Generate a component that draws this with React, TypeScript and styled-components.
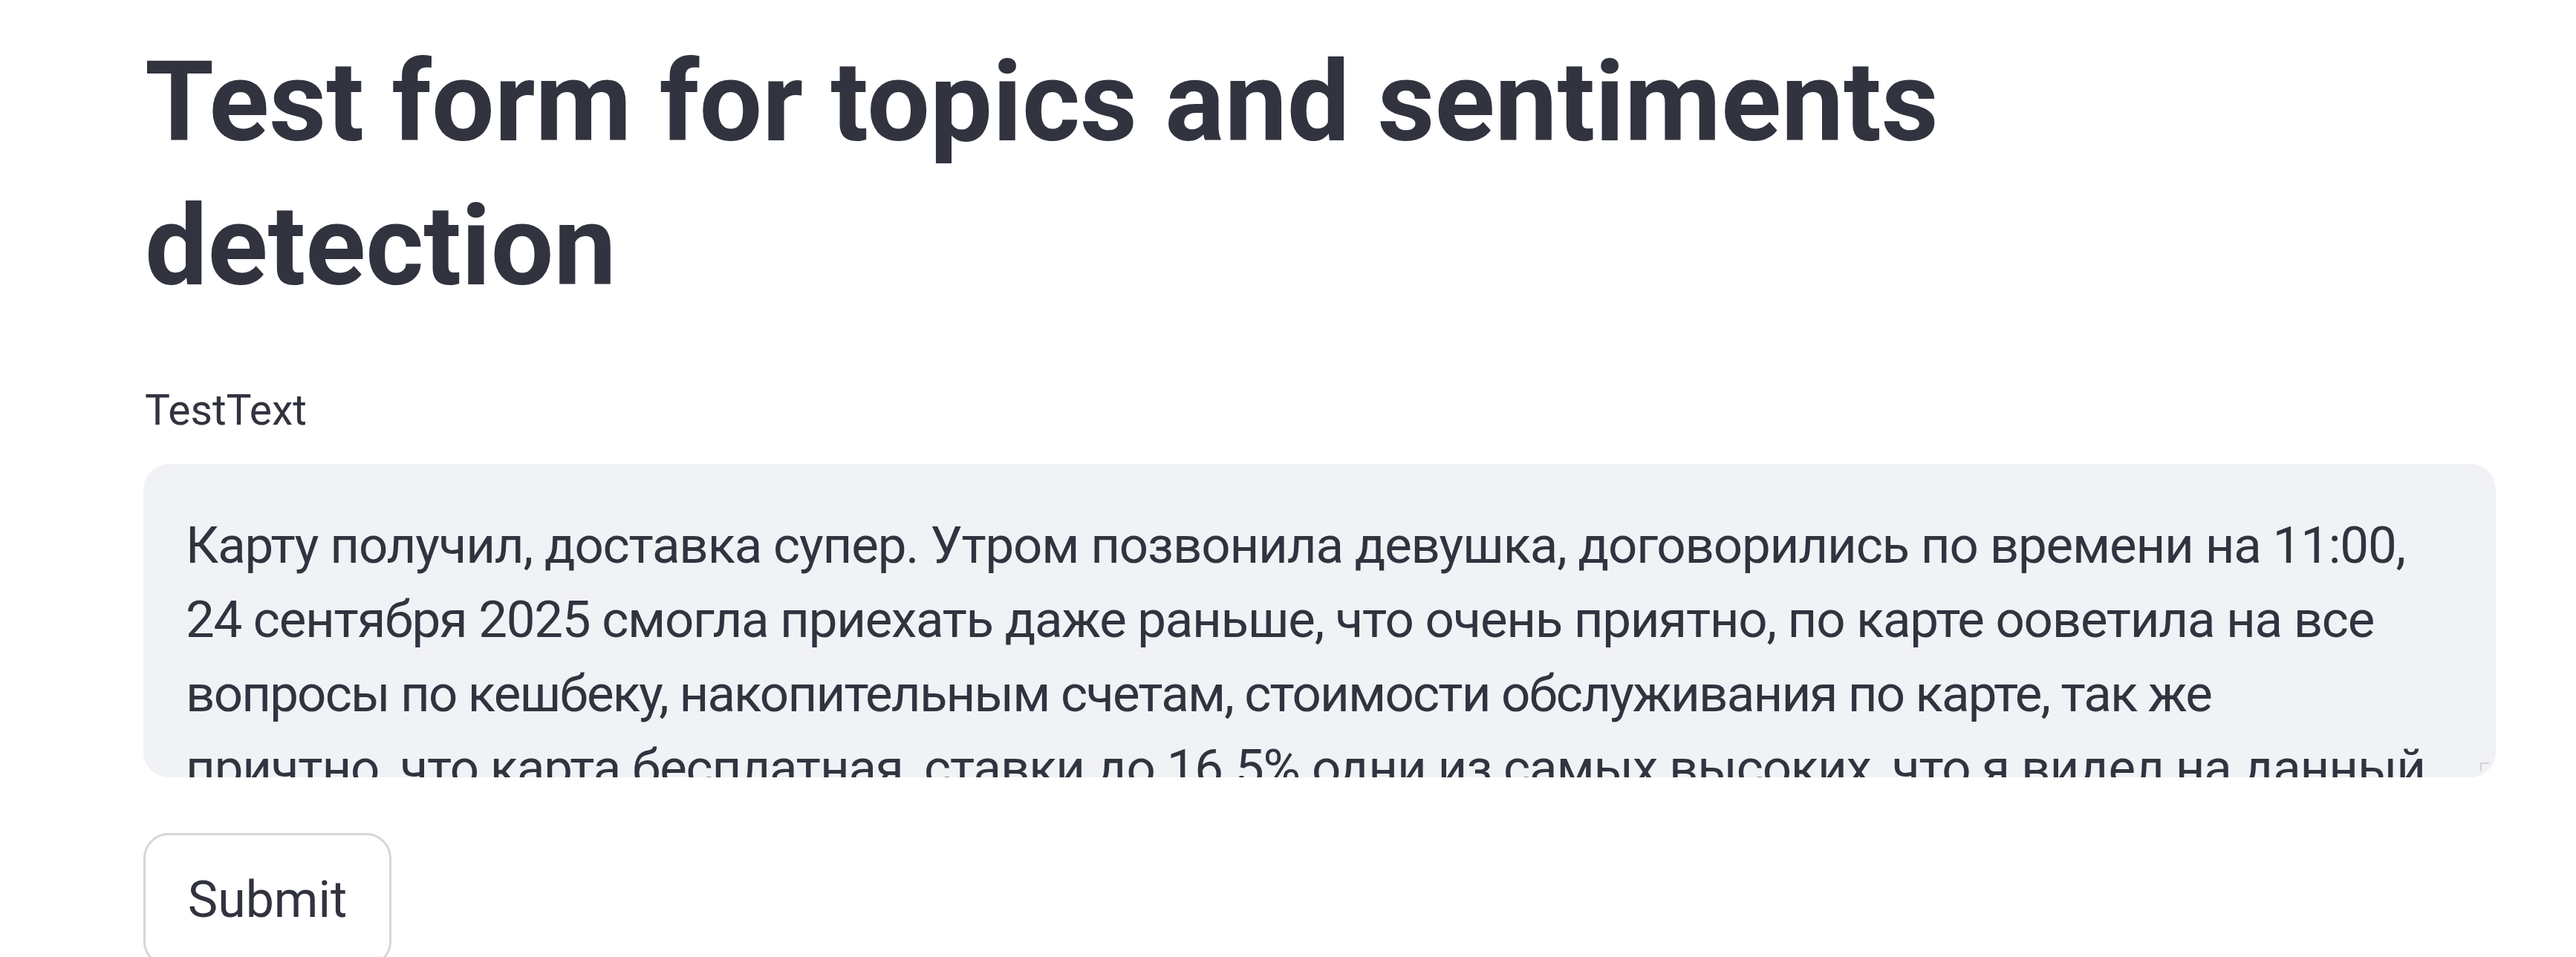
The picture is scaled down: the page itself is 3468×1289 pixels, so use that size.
import { useLayoutEffect, useRef, useState } from "react"
import styled, { createGlobalStyle } from "styled-components"

const GlobalStyle = createGlobalStyle`
    html, body {
        margin: 0;
        padding: 0;
        background: #ffffff;
        color: #31333f;
        font-family: Roboto, "Noto Sans", sans-serif;
    }
`

const Main = styled.main`
    display: flex;
    flex-direction: column;
    align-items: flex-start;
    width: 3167px;
    padding: 41px 0 0 193px;
`

const Title = styled.h1`
    margin: 0 0 84px 2px;
    font-family: Roboto, "Noto Sans", sans-serif;
    font-weight: 700;
    font-size: 150px;
    line-height: 194px;
    color: #31333f;
`

const Label = styled.label`
    margin: 0 0 32px 2px;
    font-size: 57px;
    line-height: 80px;
    color: #31333f;
`

const AreaBox = styled.div`
    position: relative;
    box-sizing: border-box;
    width: 100%;
    height: 422px;
    margin-bottom: 75px;
    padding: 60px 57px 0 57px;
    border-radius: 34px;
    background: #f0f2f6;
    overflow: hidden;
    font-family: Roboto, "Noto Sans", sans-serif;
    font-size: 69px;
    line-height: 100px;
    color: #31333f;
`

const Line = styled.span`
    display: block;
    width: max-content;
    white-space: nowrap;
`

const Grip = styled.span`
    position: absolute;
    right: 9px;
    bottom: 8px;
    width: 10px;
    height: 10px;
    border-top: 2px solid #d3d4d8;
    border-left: 2px solid #d3d4d8;
`

const Button = styled.button`
    display: flex;
    align-items: center;
    justify-content: center;
    box-sizing: border-box;
    width: 334px;
    height: 180px;
    padding: 0;
    border: 3px solid #d6d6d9;
    border-radius: 34px;
    background: #ffffff;
    font-family: Roboto, "Noto Sans", sans-serif;
    font-size: 68px;
    line-height: 1.6;
    color: #31333f;
    cursor: pointer;
`

// width = where each wrapped line ended in the original font
const lines = [
    { text: "Карту получил, доставка супер. Утром позвонила девушка, договорились по времени на 11:00,", width: 2988 },
    { text: "24 сентября 2025 смогла приехать даже раньше, что очень приятно, по карте ооветила на все", width: 2946 },
    { text: "вопросы по кешбеку, накопительным счетам, стоимости обслуживания по карте, так же", width: 2727 },
    { text: "причтно, что карта бесплатная, ставки до 16.5% одни из самых высоких, что я видел на данный", width: 3015 },
    { text: "момент.", width: 0 },
]

export default function App() {
    const lineRefs = useRef<(HTMLSpanElement | null)[]>([])
    const current = useRef<number[]>(lines.map(() => 0))
    const [spacing, setSpacing] = useState<number[]>(lines.map(() => 0))

    useLayoutEffect(() => {
        const measure = () => {
            const next = lines.map((l, i) => {
                const el = lineRefs.current[i]
                if (!el || !l.width) return 0
                const n = Array.from(l.text).length
                const natural = el.getBoundingClientRect().width - n * current.current[i]
                return (l.width - natural) / n
            })
            current.current = next
            setSpacing(next)
        }
        measure()
        document.fonts?.ready.then(measure)
    }, [])

    return (
        <>
            <GlobalStyle />
            <Main>
                <Title>
                    Test form for topics and sentiments
                    <br />
                    detection
                </Title>
                <Label id="test-text-label">TestText</Label>
                <AreaBox role="textbox" aria-multiline="true" aria-labelledby="test-text-label">
                    {lines.map((l, i) => (
                        <Line
                            key={i}
                            ref={(el) => { lineRefs.current[i] = el }}
                            style={{ letterSpacing: `${spacing[i]}px` }}
                        >
                            {l.text}
                        </Line>
                    ))}
                    <Grip />
                </AreaBox>
                <Button type="button">Submit</Button>
            </Main>
        </>
    )
}
